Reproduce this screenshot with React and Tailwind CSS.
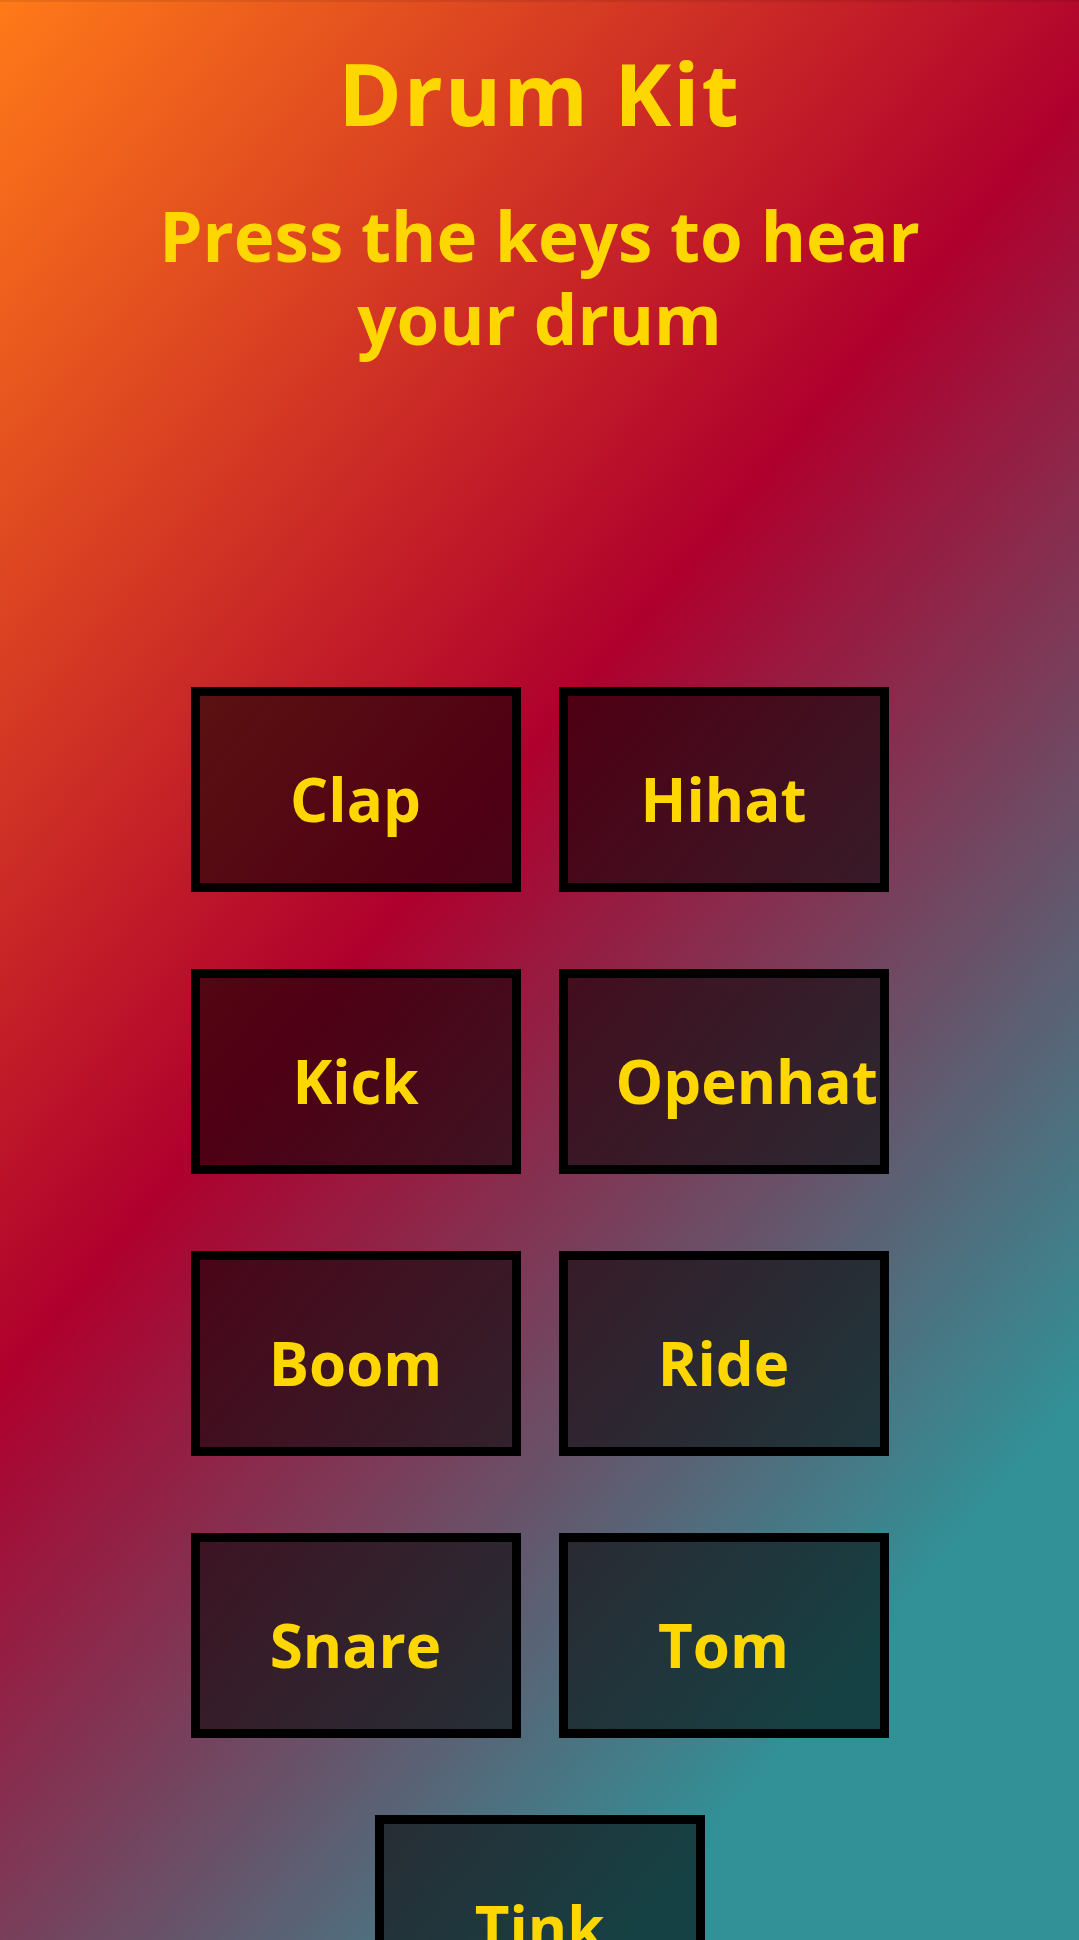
const pads = ["Clap", "Hihat", "Kick", "Openhat", "Boom", "Ride", "Snare", "Tom", "Tink"];

export default function App() {
  return (
    <div
      className="w-full h-[1940px] overflow-hidden bg-[linear-gradient(130deg,#ff7a18_0px,#af002d_890px,#319197_1730px)] text-[#ffd700] font-bold shadow-[inset_0_2px_0_rgba(0,0,0,0.08)]"
      style={{ fontFamily: '"Open Sans", "Noto Sans", sans-serif' }}
    >
      <div className="h-[50px]" />
      <h1 className="text-center text-[86px] leading-none tracking-[2px]">Drum Kit</h1>
      <h2 className="mt-[58px] mx-auto w-[800px] text-center text-[69px] leading-[83px]">
        Press the keys to hear your drum
      </h2>
      <div className="mt-[327px] mx-auto w-[698px] flex flex-wrap justify-center gap-x-[38px] gap-y-[77px]">
        {pads.map((p) => (
          <div
            key={p}
            className="w-[330px] h-[205px] border-[9px] border-black bg-black/55 px-[48px] pt-[73px] text-center text-[60px] leading-[60px] whitespace-nowrap"
          >
            {p}
          </div>
        ))}
      </div>
    </div>
  );
}
